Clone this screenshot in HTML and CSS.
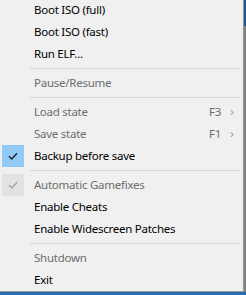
FILE: index.html
```html
<!DOCTYPE html>
<html lang="en">

<head>
    <meta charset="UTF-8">
    <title>Menu</title>
    <link rel="stylesheet" href="styles.css">
</head>

<body>

    <div class="menu">
        <div class="item"><span class="check"></span><span class="label">Boot ISO (full)</span></div>
        <div class="item"><span class="check"></span><span class="label">Boot ISO (fast)</span></div>
        <div class="item"><span class="check"></span><span class="label">Run ELF...</span></div>
        <div class="sep"></div>
        <div class="item off"><span class="check"></span><span class="label">Pause/Resume</span></div>
        <div class="sep"></div>
        <div class="item off"><span class="check"></span><span class="label">Load state</span><span class="key">F3</span><span class="more">&#8250;</span></div>
        <div class="item off"><span class="check"></span><span class="label">Save state</span><span class="key">F1</span><span class="more">&#8250;</span></div>
        <div class="item"><span class="check on">
            <svg width="10" height="8" viewBox="0 0 10 8"><path d="M1 4.2 L3.8 7 L9 1.2" fill="none" stroke="#1a1a1a" stroke-width="1.3"/></svg>
        </span><span class="label">Backup before save</span></div>
        <div class="sep"></div>
        <div class="item off"><span class="check dim">
            <svg width="10" height="8" viewBox="0 0 10 8"><path d="M1 4.2 L3.8 7 L9 1.2" fill="none" stroke="#a3a3a3" stroke-width="1.3"/></svg>
        </span><span class="label">Automatic Gamefixes</span></div>
        <div class="item"><span class="check"></span><span class="label">Enable Cheats</span></div>
        <div class="item"><span class="check"></span><span class="label">Enable Widescreen Patches</span></div>
        <div class="sep"></div>
        <div class="item off"><span class="check"></span><span class="label">Shutdown</span></div>
        <div class="item"><span class="check"></span><span class="label">Exit</span></div>
    </div>

</body>

</html>
```

FILE: styles.css
```css
body {
    margin: 0;
    background: linear-gradient(to bottom, #2a6cb3 0, #2a6cb3 26px, #a2a2a2 26px);
    font-family: "Noto Sans", "Open Sans", sans-serif;
    font-size: 11.5px;
    letter-spacing: -0.25px;
    overflow: hidden;
}

.menu {
    width: 243px;
    margin: -2px 0 0 -1px;
    border: 1px solid #979797;
    background-color: #f0f0f0;
    box-shadow: 2px 2px 1px rgba(0, 0, 0, 0.2);
}

.item {
    display: flex;
    align-items: center;
    height: 22px;
    padding-left: 2px;
    color: #000;
}

.item.off {
    color: #6d6d6d;
}

.check {
    width: 22px;
    height: 22px;
    margin-right: 10px;
    display: flex;
    align-items: center;
    justify-content: center;
}

.check.on {
    background-color: #91c9f7;
}

.check.dim {
    background-color: #e2e2e2;
}

.label {
    flex: 1;
    white-space: nowrap;
    padding-bottom: 2px;
}

.key {
    color: #6d6d6d;
    padding-bottom: 2px;
}

.more {
    width: 22px;
    text-align: center;
    color: #a0a0a0;
    font-size: 13px;
    padding-bottom: 2px;
}

.sep {
    height: 1px;
    margin: 3px 3px 3px 30px;
    background-color: #d7d7d7;
}
```
